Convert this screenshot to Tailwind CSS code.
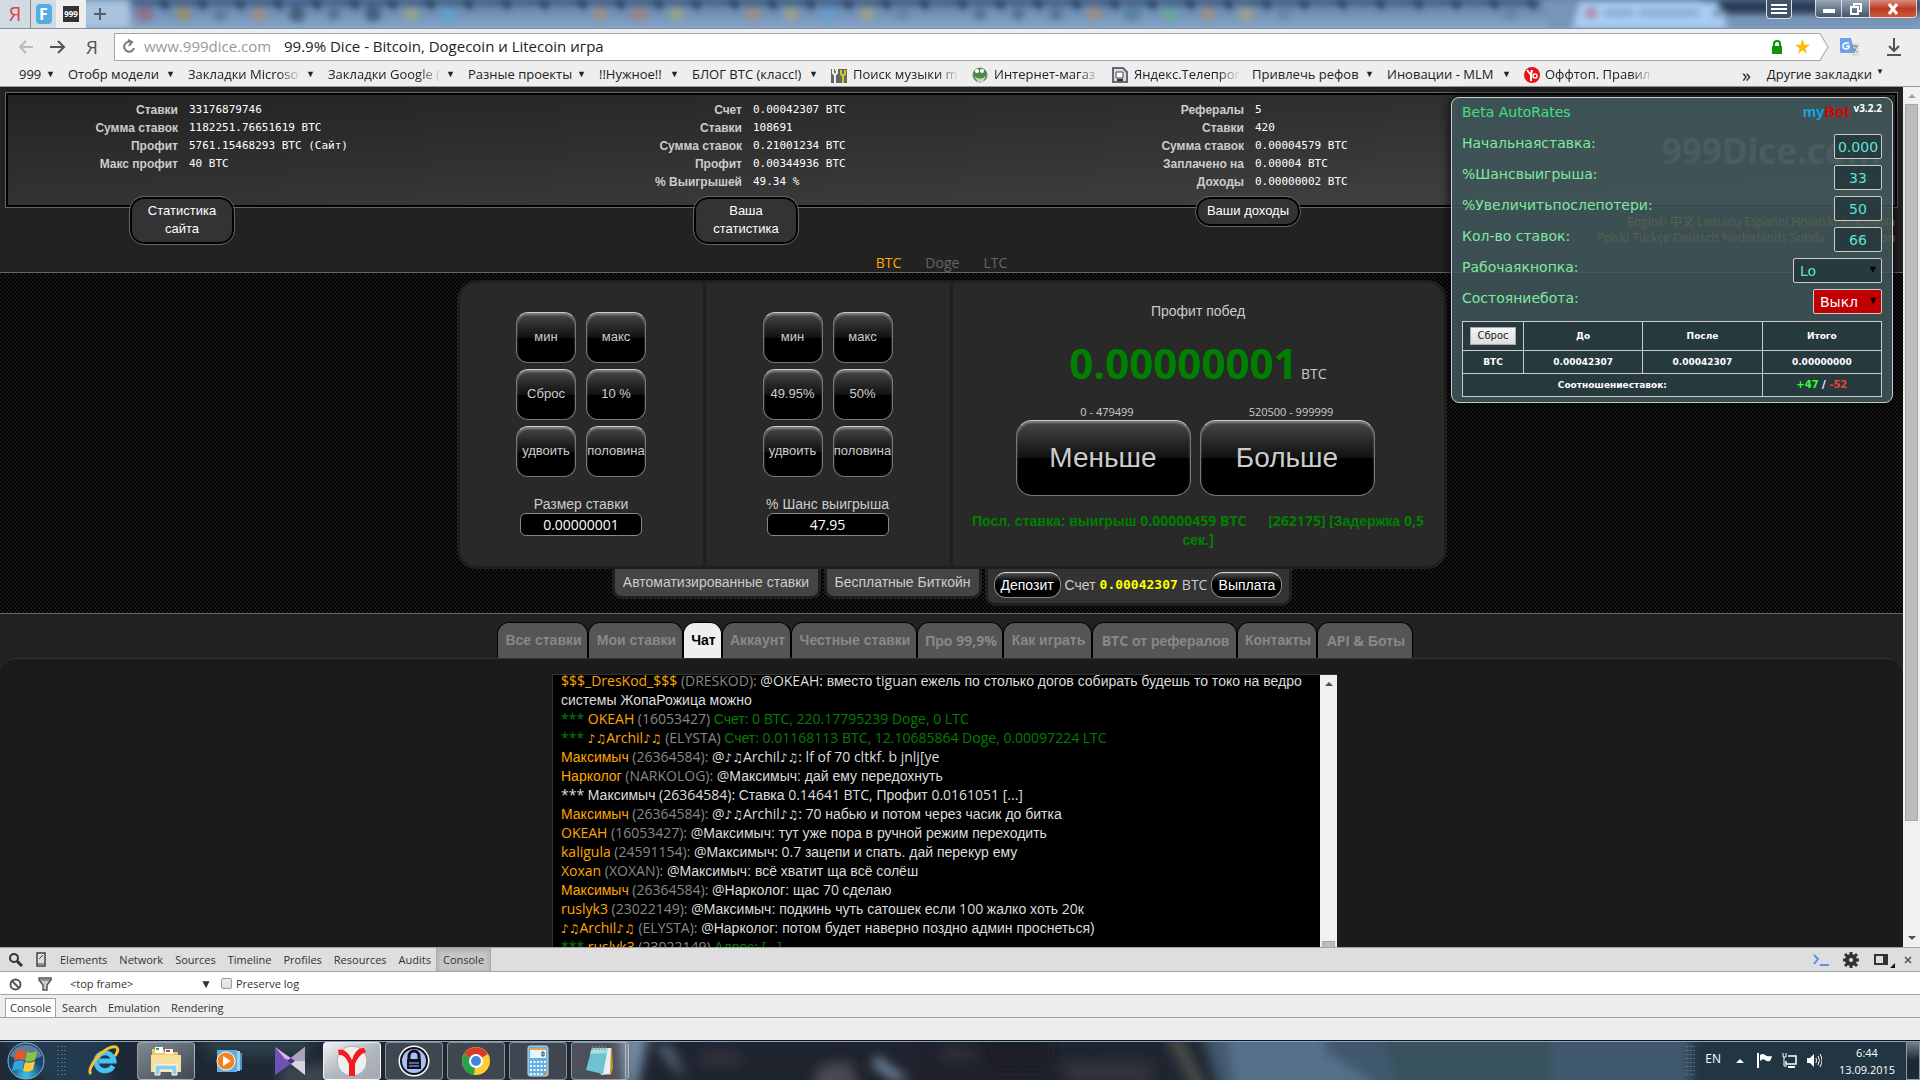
<!DOCTYPE html>
<html lang="ru">
<head>
  <meta charset="UTF-8" />
  <meta name="viewport" content="width=device-width, initial-scale=1.0" />
  <title>99.9% Dice - Bitcoin, Dogecoin и Litecoin игра</title>
  <script src="https://cdn.jsdelivr.net/npm/@tailwindcss/browser@4"></script>
</head>
<body class="h-screen flex flex-col overflow-hidden bg-[#222] font-['Open_Sans','Liberation_Sans',sans-serif] text-sm text-[#ccc]">

  <!-- Browser tab strip -->
  <header class="h-7 shrink-0 relative flex bg-linear-to-b from-[#5f7fa4] to-[#86a5c9] overflow-hidden">
    <svg class="absolute inset-0 w-full h-full blur-[3px]" aria-hidden="true">
      <defs>
        <pattern id="tabs" x="128" width="38" height="28" patternUnits="userSpaceOnUse">
          <path d="M-2 0h40l-7 5H9z" fill="#3b587c" />
          <path d="M28 0h10l4 14z M0 0h4l-4 12z" fill="#213a5a" />
        </pattern>
      </defs>
      <rect x="128" width="1450" height="28" fill="url(#tabs)" />
      <rect width="130" height="28" fill="#a9c3dd" />
      <path d="M1540 0h380v28h-370z" fill="#7795b8" />
      <path d="M1700 0h220v14h-190z" fill="#2c3d55" />
      <path d="M1572 28l8-26h138l10 26z" fill="#a9cdf2" />
      <g stroke-width="16" stroke-linecap="round" opacity=".55">
        <path d="M145 14h0" stroke="#a85468" /><path d="M183 14h0" stroke="#b08a3c" /><path d="M220 15h0" stroke="#4a6585" stroke-width="12" />
        <path d="M259 14h0M600 14h0M753 14h0M1094 14h0M1208 14h0" stroke="#b58a68" /><path d="M297 14h0M373 14h0" stroke="#23364c" />
        <path d="M334 14h0M980 14h0M1018 14h0M1056 14h0" stroke="#3d526c" stroke-width="12" /><path d="M411 14h0M677 14h0M791 14h0M867 14h0M1246 14h0" stroke="#b4ac74" />
        <path d="M448 14h0M829 14h0" stroke="#58a6dc" /><path d="M639 14h0" stroke="#c0766a" /><path d="M1132 14h0" stroke="#417a83" /><path d="M1169 14h0" stroke="#62b38c" />
        <path d="M902 14h0M1284 14h0M1510 14h0" stroke="#5e7694" stroke-width="12" /><path d="M1591 13h0" stroke="#b5526c" stroke-width="12" />
        <path d="M1607 13h24M1642 13h54" stroke="#6c8db5" stroke-width="7" /><path d="M1717 13h0" stroke="#445e80" stroke-width="8" />
      </g>
    </svg>
    <nav class="relative flex w-[172px]">
      <a href="#" class="w-[31px] border-r border-[#888] bg-[#d3dbe2] text-center text-[20px] leading-7 text-[#e0404b]">Я</a>
      <a href="#" class="w-[25px] bg-[#d3dbe2] flex items-center justify-center"><span class="w-4 h-5 rounded-sm bg-[#55ace0] text-white font-bold text-base leading-5 text-center">F</span></a>
      <a href="#" class="w-[30px] bg-[#eee] flex items-center justify-center"><span class="w-4 h-4 bg-[#333] text-white font-bold text-[8px] leading-4 text-center">999</span></a>
      <button class="w-7 flex items-center justify-center" aria-label="Новая вкладка"><svg class="w-3 h-3" viewBox="0 0 12 12"><path d="M6 0v12M0 6h12" stroke="#555f6b" stroke-width="2" /></svg></button>
    </nav>
    <div class="relative ml-auto mr-[3px] flex items-start">
      <button aria-label="Меню" class="w-[26px] h-[19px] mr-[23px] rounded-b border border-t-0 border-white/80 bg-[#41536a] flex items-center justify-center"><svg class="w-4 h-3" viewBox="0 0 16 12"><path d="M0 2h16M0 6h16M0 10h16" stroke="#fff" stroke-width="2" /></svg></button>
      <button aria-label="Свернуть" class="w-[27px] h-[18px] rounded-bl border border-t-0 border-white/70 bg-linear-to-b from-[#9aa8b8] to-[#44566c] flex items-center justify-center"><span class="w-3 h-1 mt-1 bg-white"></span></button>
      <button aria-label="Развернуть" class="w-[27px] h-[18px] border-b border-white/70 bg-linear-to-b from-[#9aa8b8] to-[#44566c] flex items-center justify-center"><svg class="w-3 h-3" viewBox="0 0 12 12" fill="none" stroke="#fff" stroke-width="2"><path d="M4 3V1h7v7H9M1 4h7v7H1z" /></svg></button>
      <button aria-label="Закрыть" class="w-12 h-[18px] rounded-br border border-t-0 border-white/70 bg-linear-to-b from-[#d98a7c] via-[#c03a22] to-[#c75a3c] flex items-center justify-center"><svg class="w-3 h-3" viewBox="0 0 12 12"><path d="M2 1l8 10M10 1L2 11" stroke="#fff" stroke-width="3" /></svg></button>
    </div>
  </header>

  <!-- Address bar -->
  <div class="h-[33px] shrink-0 flex items-center bg-[#eee] border-t border-[#7c93ad] pt-[3px] pl-[18px] pr-3">
    <button aria-label="Назад" class="w-8"><svg class="w-4 h-4" viewBox="0 0 16 16" fill="none" stroke="#bbb" stroke-width="2"><path d="M15 8H2M8 2L2 8l6 6" /></svg></button>
    <button aria-label="Вперед" class="w-8"><svg class="w-4 h-4" viewBox="0 0 16 16" fill="none" stroke="#555" stroke-width="2"><path d="M0 8h13M8 2l6 6-6 6" /></svg></button>
    <a href="#" class="w-8 pl-1 text-[19px] leading-6 text-[#555]">Я</a>
    <div class="flex-1 h-7 relative flex items-center pl-[9px] mr-[7px] text-[15px]">
      <svg class="absolute inset-0 w-full h-full" viewBox="0 0 1710 28" preserveAspectRatio="none"><path d="M.5.5H1701L1709 14L1701 27.500H.5z" fill="#fff" stroke="#a5a5a5" /></svg>
      <svg class="relative w-[13px] h-[15px] mr-2" viewBox="0 0 13 15" fill="none" stroke="#777" stroke-width="2"><path d="M11 9a5 5 0 1 1-3-6M5 1l4 2-3 4" /></svg>
      <span class="relative text-[#999] w-[140px]">www.999dice.com</span>
      <span class="relative text-[#222]">99.9% Dice - Bitcoin, Dogecoin и Litecoin игра</span>
      <svg class="relative w-3 h-[14px] ml-auto" viewBox="0 0 12 14"><path d="M3 6V4a3 3 0 0 1 6 0v2" fill="none" stroke="#0d940d" stroke-width="2" /><path d="M1 6h10v8H1z" fill="#0d940d" /></svg>
      <svg class="relative w-[15px] h-[15px] ml-3 mr-[19px]" viewBox="0 0 16 16"><path d="M8 0l2 6h6l-5 4 2 6-5-4-5 4 2-6-5-4h6z" fill="#fb0" /></svg>
    </div>
    <svg class="w-5 h-5 mr-[26px] ml-1" viewBox="0 0 20 20"><path d="M9 6h10v13H12z" fill="#ddd" /><path d="M0 1h11l4 15H1Q0 16 0 14z" fill="#6fa0ee" /><path d="M9 6H6a3 3 0 1 0 3 3H6" fill="none" stroke="#fff" stroke-width="1.500" /><path d="M11 9h7M15 8v2M17 9q-2 5-4 6M13 11l4 4" fill="none" stroke="#888" /></svg>
    <svg class="w-4 h-5 mr-[6px]" viewBox="0 0 16 20" fill="none" stroke="#555" stroke-width="2"><path d="M8 1v13M3 9l5 5 5-5M1 18h14" /></svg>
  </div>

  <!-- Bookmarks -->
  <nav class="h-[26px] shrink-0 flex items-center bg-[#eee] border-b border-[#999] pt-0.5 pl-[19px] pr-5 text-[13px] text-[#222] whitespace-nowrap [&_i]:not-italic [&_i]:text-[9px] [&_i]:w-[10px] [&_i]:mr-3 [&_a]:flex [&_a]:items-center [&_a]:justify-between [&_span]:overflow-hidden">
    <a href="#" class="w-[49px]"><span>999</span><i>▼</i></a>
    <a href="#" class="w-[120px]"><span>Отобр модели</span><i>▼</i></a>
    <a href="#" class="w-[140px]"><span class="w-[114px] mask-r-from-80%">Закладки Microso</span><i>▼</i></a>
    <a href="#" class="w-[140px]"><span class="w-[114px] mask-r-from-80%">Закладки Google (</span><i>▼</i></a>
    <a href="#" class="w-[131px]"><span>Разные проекты</span><i>▼</i></a>
    <a href="#" class="w-[93px]"><span>!!Нужное!!</span><i>▼</i></a>
    <a href="#" class="w-[139px]"><span>БЛОГ ВТС (класс!)</span><i>▼</i></a>
    <a href="#" class="w-[141px]"><svg class="w-4 h-4 shrink-0 mr-[6px]" viewBox="0 0 16 16"><path d="M0 2h16v14H0z" fill="#666" /><path d="M2 0v6l2 2v8M6 0v6L4 8M5 0v4" stroke="#eee" stroke-width="2" fill="none" /><path d="M10 3v4l2 2v7M14 3v4l-2 2" stroke="#cc2" stroke-width="2" fill="none" /></svg><span class="w-[106px] mr-auto mask-r-from-80%">Поиск музыки m</span></a>
    <a href="#" class="w-[140px]"><svg class="w-4 h-4 shrink-0 mr-[6px]" viewBox="0 0 16 16"><circle cx="8" cy="8" r="7" fill="#498a48" stroke="#777" /><path d="M2 9q6 5 12 0l-3 6H6z" fill="#c9d6be" /><circle cx="5" cy="4" r="2" fill="#fff" /><circle cx="10" cy="4" r="2" fill="#fff" /></svg><span class="w-[106px] mr-auto mask-r-from-80%">Интернет-магаз</span></a>
    <a href="#" class="w-[140px]"><svg class="w-4 h-4 shrink-0 mr-[6px]" viewBox="0 0 16 16"><path d="M1 1h10l4 4v10H1z" fill="#ddd" stroke="#667" stroke-width="2" /><path d="M4 5h7v6H4z" fill="#fff" stroke="#445" /><path d="M5 13h6" stroke="#333" stroke-width="2" /></svg><span class="w-[106px] mr-auto mask-r-from-80%">Яндекс.Телепрог</span></a>
    <a href="#" class="w-[135px]"><span>Привлечь рефов</span><i>▼</i></a>
    <a href="#" class="w-[137px]"><span>Иновации - MLM</span><i>▼</i></a>
    <a href="#" class="w-[140px]"><svg class="w-4 h-4 shrink-0 mr-[5px]" viewBox="0 0 16 16"><circle cx="8" cy="8" r="8" fill="#e11" /><path d="M3 3l4 5v6M8 3L7 8" stroke="#fff" stroke-width="2" fill="none" /><circle cx="11" cy="9" r="2" fill="none" stroke="#fff" stroke-width="1.500" /></svg><span class="w-[108px] mr-auto mask-r-from-80%">Оффтоп. Правил</span></a>
    <span class="ml-auto mr-4 text-lg leading-5">»</span>
    <a href="#" class="mr-4">Другие закладки<b class="text-[8px] ml-1 mb-2">▼</b></a>
  </nav>

  <!-- Page and its scrollbar -->
  <div class="flex-1 min-h-0 flex relative">
    <main class="flex-1 min-w-0 overflow-hidden flex flex-col font-['Liberation_Sans',sans-serif]">
      <section class="shrink-0 h-[186px] relative border-b border-[#666] pt-[5px] px-[5px] bg-[#222]">
        <div class="h-[116px] border border-[#666] p-0.5 bg-black">
          <div class="h-full bg-linear-to-br from-[#232323] to-[#444] pt-[6px] pl-[30px] grid grid-cols-[564fr_502fr_791fr] [&_dl]:grid [&_dl]:grid-cols-[140px_1fr] [&_dl]:gap-x-[11px] [&_dl]:content-start [&_dl]:leading-[18px] [&_dt]:text-right [&_dt]:text-xs [&_dt]:leading-[18px] [&_dt]:font-bold [&_dd]:text-[11px] [&_dd]:leading-[18px] [&_dd]:text-white [&_dd]:font-['DejaVu_Sans_Mono',monospace]">
            <dl>
              <dt>Ставки</dt><dd>33176879746</dd>
              <dt>Сумма ставок</dt><dd>1182251.76651619 BTC</dd>
              <dt>Профит</dt><dd>5761.15468293 BTC (Сайт)</dd>
              <dt>Макс профит</dt><dd>40 BTC</dd>
            </dl>
            <dl>
              <dt>Счет</dt><dd>0.00042307 BTC</dd>
              <dt>Ставки</dt><dd>108691</dd>
              <dt>Сумма ставок</dt><dd>0.21001234 BTC</dd>
              <dt>Профит</dt><dd>0.00344936 BTC</dd>
              <dt>% Выигрышей</dt><dd>49.34 %</dd>
            </dl>
            <dl>
              <dt>Рефералы</dt><dd>5</dd>
              <dt>Ставки</dt><dd>420</dd>
              <dt>Сумма ставок</dt><dd>0.00004579 BTC</dd>
              <dt>Заплачено на</dt><dd>0.00004 BTC</dd>
              <dt>Доходы</dt><dd>0.00000002 BTC</dd>
            </dl>
          </div>
        </div>
        <div class="relative -mt-[11px] h-[56px] pl-8 pr-1 grid grid-cols-[564fr_502fr_791fr] text-[13px] leading-[18px] text-white [&_div]:w-[290px] [&_div]:flex [&_div]:justify-center [&_div]:items-start [&_button]:rounded-[14px] [&_button]:border-2 [&_button]:border-black [&_button]:outline [&_button]:outline-[#666] [&_button]:bg-[#333] [&_button]:w-[104px] [&_button]:pt-[3px] [&_button]:pb-1">
          <div><button>Статистика<br>сайта</button></div>
          <div><button>Ваша<br>статистика</button></div>
          <div><button>Ваши доходы</button></div>
        </div>
        <div class="flex justify-center gap-6 pr-5 text-sm leading-5 text-[#666] font-['Open_Sans',sans-serif]">
          <a href="#" class="text-[orange]">BTC</a><a href="#">Doge</a><a href="#">LTC</a>
        </div>
        <p class="absolute right-[22px] top-[37px] font-['Open_Sans',sans-serif] font-bold text-[35px] leading-[54px] text-[#888]">999Dice.com</p>
        <p class="absolute right-2 top-[127px] text-right text-xs leading-4 text-[#f90] font-['Open_Sans','Noto_Sans_CJK_SC',sans-serif]">English 中文 Lietuvių Español Hrvatski Indonesia<br>Polski Türkçe Deutsch Nederlands Sunda &#xF8E4;&#xF8D7;&#xF8DC; Klingon</p>
      </section>

      <!-- Betting area -->
      <section class="shrink-0 h-[341px] pt-[7px] flex flex-col items-center border-b border-[#666] bg-[repeating-conic-gradient(#000_0_25%,#191919_0_50%)] bg-[length:4px_4px]">
        <div class="w-[990px] h-[289px] rounded-[20px] border-3 border-[#1f1f1f] bg-[#292929] grid grid-cols-[246px_247px_1fr] [&_button]:text-[#ccc] [&_button]:border [&_button]:border-[#777] [&_button]:border-t-[#ccc] [&_button]:bg-linear-to-b [&_button]:from-[#4a4a4a] [&_button]:via-[#111] [&_button]:via-50% [&_button]:to-black [&_button]:to-50% [&_button]:shadow-[inset_0_2px_2px_#999a]">
          <div class="border-r-3 border-[#1f1f1f] flex flex-col items-center pt-[29px]">
            <div class="grid grid-cols-[60px_60px] auto-rows-[51px] gap-x-[10px] gap-y-[6px] text-[13px] [&_button]:rounded-xl [&_button]:whitespace-nowrap">
              <button>мин</button><button>макс</button>
              <button>Сброс</button><button>10 %</button>
              <button>удвоить</button><button>половина</button>
            </div>
            <label for="bet" class="mt-[18px] leading-[18px]">Размер ставки</label>
            <input id="bet" value="0.00000001" class="w-[122px] h-[23px] rounded-md border border-[#888] bg-black text-white text-center font-['Open_Sans',sans-serif]">
          </div>
          <div class="border-r-3 border-[#1f1f1f] flex flex-col items-center pt-[29px]">
            <div class="grid grid-cols-[60px_60px] auto-rows-[51px] gap-x-[10px] gap-y-[6px] text-[13px] [&_button]:rounded-xl [&_button]:whitespace-nowrap">
              <button>мин</button><button>макс</button>
              <button>49.95%</button><button>50%</button>
              <button>удвоить</button><button>половина</button>
            </div>
            <label for="chance" class="mt-[18px] leading-[18px]">% Шанс выигрыша</label>
            <input id="chance" value="47.95" class="w-[122px] h-[23px] rounded-md border border-[#888] bg-black text-white text-center font-['Open_Sans',sans-serif]">
          </div>
          <div class="flex flex-col items-center pt-[18px]">
            <p class="leading-5">Профит побед</p>
            <p class="mt-3 h-[60px] leading-[60px] font-['Open_Sans',sans-serif]"><b class="text-[42px] text-[green]">0.00000001</b> BTC</p>
            <div class="grid grid-cols-[175px_175px] gap-x-[9px] mt-[11px] pr-[6px] text-center">
              <span class="pl-2 text-[11px] leading-4 font-['Open_Sans',sans-serif]">0 - 479499</span>
              <span class="pl-2 text-[11px] leading-4 font-['Open_Sans',sans-serif]">520500 - 999999</span>
              <button class="h-[76px] rounded-2xl text-[28px]">Меньше</button>
              <button class="h-[76px] rounded-2xl text-[28px]">Больше</button>
            </div>
            <p class="mt-[15px] px-3 text-center font-bold leading-[19px] text-[green] whitespace-pre-wrap [&>span]:font-['Open_Sans',sans-serif]">Посл. ставка: выигрыш <span>0.00000459 BTC      [262175] [</span>Задержка <span>0,5</span> сек.]</p>
          </div>
        </div>
        <div class="flex items-start gap-[3px] [&>*]:border-3 [&>*]:border-t-0 [&>*]:border-[#1f1f1f] [&>*]:rounded-b-[10px] whitespace-nowrap">
          <button class="h-[30px] w-[209px] pb-0.5 bg-[#444] text-[#ccc]">Автоматизированные ставки</button>
          <button class="h-[30px] w-[158px] pb-0.5 bg-[#444] text-[#ccc]">Бесплатные Биткойн</button>
          <div class="h-[37px] w-[307px] pb-0.5 bg-[#333] flex items-center justify-center gap-1 [&_button]:h-[26px] [&_button]:rounded-xl [&_button]:border [&_button]:border-[#888] [&_button]:border-t-[#ddd] [&_button]:bg-linear-to-b [&_button]:from-[#555] [&_button]:to-black [&_button]:to-50% [&_button]:text-white">
            <button class="w-[67px]">Депозит</button>
            <span>Счет</span><b class="font-['DejaVu_Sans_Mono',monospace] text-[13px] text-[#ff0]">0.00042307</b><span class="font-['Open_Sans',sans-serif]">BTC</span>
            <button class="w-[71px]">Выплата</button>
          </div>
        </div>
      </section>

      <!-- Tabs -->
      <nav class="shrink-0 h-[44px] pt-[8px] pl-[7px] flex justify-center bg-[#222] text-sm font-bold text-[#888] whitespace-nowrap [&_span]:font-['Open_Sans',sans-serif] [&_a]:h-[36px] [&_a]:leading-[35px] [&_a]:pl-0.5 [&_a]:text-center [&_a]:border [&_a]:border-b-0 [&_a]:border-black [&_a]:rounded-t-xl">
        <a href="#" class="w-[91px] bg-[#555]">Все ставки</a>
        <a href="#" class="w-[95px] bg-[#555]">Мои ставки</a>
        <a href="#" class="w-[39px] bg-[#eee] text-black">Чат</a>
        <a href="#" class="w-[69px] bg-[#555]">Аккаунт</a>
        <a href="#" class="w-[126px] bg-[#555]">Честные ставки</a>
        <a href="#" class="w-[86px] bg-[#555]">Про <span>99,9%</span></a>
        <a href="#" class="w-[89px] bg-[#555]">Как играть</a>
        <a href="#" class="w-[145px] bg-[#555]"><span>BTC</span> от рефералов</a>
        <a href="#" class="w-[80px] bg-[#555]">Контакты</a>
        <a href="#" class="w-[96px] bg-[#555]"><span>API &amp;</span> Боты</a>
      </nav>

      <!-- Chat: Cyrillic runs use the sans face, everything else Open Sans -->
      <section class="flex-1 min-h-0 flex justify-center items-stretch pt-[15px] pr-[14px] border-t border-[#333] rounded-t-[16px] bg-[#1b1b1b]">
        <div class="w-[785px] flex overflow-hidden border border-b-0 border-r-0 border-[#333] bg-black">
          <div class="flex-1 pl-2 -mt-1 text-sm leading-[19px] text-[#ddd] font-['Open_Sans','DejaVu_Sans',sans-serif] [&_p]:h-[19px] [&_p]:whitespace-nowrap [&_b]:font-normal [&_b]:text-[orange] [&_i]:not-italic [&_i]:text-[#888] [&_em]:not-italic [&_em]:text-[green] [&_span]:font-['Liberation_Sans',sans-serif] [&_u]:no-underline [&_u]:text-xs">
            <p><b>$$$_DresKod_$$$</b> <i>(DRESKOD):</i> @OKEAH: <span>вместо</span> tiguan <span>ежель по столько догов собирать будешь то токо на ведро</span></p>
            <p><span>системы ЖопаРожица можно</span></p>
            <p><em>***</em> <b>OKEAH</b> <i>(16053427)</i> <em><span>Счет</span>: 0 BTC, 220.17795239 Doge, 0 LTC</em></p>
            <p><em>***</em> <b><u>♪♫</u>Archil<u>♪♫</u></b> <i>(ELYSTA)</i> <em><span>Счет</span>: 0.01168113 BTC, 12.10685864 Doge, 0.00097224 LTC</em></p>
            <p><b><span>Максимыч</span></b> <i>(26364584):</i> @<u>♪♫</u>Archil<u>♪♫</u>: lf of 70 cltkf. b jnlj[ye</p>
            <p><b><span>Нарколог</span></b> <i>(NARKOLOG):</i> @<span>Максимыч: дай ему передохнуть</span></p>
            <p>*** <span>Максимыч</span> (26364584): <span>Ставка</span> 0.14641 BTC, <span>Профит</span> 0.0161051 [...]</p>
            <p><b><span>Максимыч</span></b> <i>(26364584):</i> @<u>♪♫</u>Archil<u>♪♫</u>: 70 <span>набью и потом через часик до битка</span></p>
            <p><b>OKEAH</b> <i>(16053427):</i> @<span>Максимыч: тут уже пора в ручной режим переходить</span></p>
            <p><b>kaligula</b> <i>(24591154):</i> @<span>Максимыч</span>: 0.7 <span>зацепи и спать. дай перекур ему</span></p>
            <p><b>Xoxan</b> <i>(XOXAN):</i> @<span>Максимыч: всё хватит ща всё солёш</span></p>
            <p><b><span>Максимыч</span></b> <i>(26364584):</i> @<span>Нарколог: щас</span> 70 <span>сделаю</span></p>
            <p><b>ruslyk3</b> <i>(23022149):</i> @<span>Максимыч: подкинь чуть сатошек если</span> 100 <span>жалко хоть</span> 20<span>к</span></p>
            <p><b><u>♪♫</u>Archil<u>♪♫</u></b> <i>(ELYSTA):</i> @<span>Нарколог: потом будет наверно поздно админ проснеться)</span></p>
            <p><em>***</em> <b>ruslyk3</b> <i>(23022149)</i> <em><span>Адрес</span>: [...]</em></p>
          </div>
          <div class="w-[17px] bg-[#f1f1f1] flex flex-col items-center justify-between pt-[7px]">
            <svg class="w-2 h-1" viewBox="0 0 8 4"><path d="M0 4l4-4 4 4z" fill="#505050" /></svg>
            <div class="w-[13px] h-[6px] border border-b-0 border-[#a8a8a8] bg-[#bcbcbc]"></div>
          </div>
        </div>
      </section>
    </main>
    <div class="w-[17px] bg-[#f1f1f1] flex flex-col items-center py-[7px]">
      <svg class="w-2 h-1" viewBox="0 0 8 4"><path d="M0 4l4-4 4 4z" fill="#a3a3a3" /></svg>
      <div class="w-[13px] h-[717px] mt-[6px] border border-[#a8a8a8] bg-[#bcbcbc]"></div>
      <svg class="w-2 h-1 mt-auto" viewBox="0 0 8 4"><path d="M0 0l4 4 4-4z" fill="#505050" /></svg>
    </div>

    <!-- Bot panel floating over the page -->
    <aside class="absolute right-[27px] top-[10px] w-[442px] h-[306px] rounded-lg border border-[#ccc] bg-[#40565a]/88 shadow-[0_0_12px_#000] px-[10px] font-['DejaVu_Sans',sans-serif] text-sm text-[#7fe8a0]">
      <div class="h-[36px] pt-1 flex justify-between">
        <h2 class="leading-5 text-[#3fe07f]">Beta AutoRates</h2>
        <p class="flex gap-1 font-bold"><span class="font-['Liberation_Sans',sans-serif] text-[15px] leading-5 text-[#e00000]"><span class="text-[#12a5e8]">my</span>Bot</span><span class="font-['Open_Sans',sans-serif] text-[10px] leading-3 text-white">v3.2.2</span></p>
      </div>
      <form class="[&_div]:flex [&_div]:h-[31px] [&_div]:justify-between [&_label]:leading-[18px] [&_input]:w-12 [&_input]:h-[25px] [&_input]:rounded-xs [&_input]:border [&_input]:border-[#ccc] [&_input]:bg-[#22353a]/80 [&_input]:text-center [&_input]:text-[#5fe0d8] [&_select]:h-[25px] [&_select]:rounded-xs [&_select]:border [&_select]:border-[#ccc] [&_select]:appearance-none [&_select]:pl-[6px] [&_span]:relative [&_i]:absolute [&_i]:right-[6px] [&_i]:top-[6px] [&_i]:text-[8px] [&_i]:leading-3 [&_i]:text-black [&_i]:not-italic">
        <div><label for="start">Начальнаяставка:</label><input id="start" value="0.000"></div>
        <div><label for="win">%Шансвыигрыша:</label><input id="win" value="33"></div>
        <div><label for="inc">%Увеличитьпослепотери:</label><input id="inc" value="50"></div>
        <div><label for="count">Кол-во ставок:</label><input id="count" value="66"></div>
        <div><label for="side">Рабочаякнопка:</label><span><select id="side" class="w-[89px] bg-[#22353a]/80 text-[#5fe0d8]"><option>Lo</option><option>Hi</option></select><i>▼</i></span></div>
        <div><label for="state">Состояниебота:</label><span><select id="state" class="w-[69px] bg-[#c00000] text-white"><option>Выкл</option><option>Вкл</option></select><i>▼</i></span></div>
      </form>
      <table class="w-full mt-px table-fixed border-collapse bg-[#1f3236]/70 text-[9px] font-bold text-white text-center [&_td]:border [&_td]:border-[#ccc] [&_th]:border [&_th]:border-[#ccc]">
        <tr class="h-[29px]"><th class="w-[61px]"><button class="w-[46px] h-[18px] border border-[#aaa] bg-linear-to-b from-[#f6f6f6] to-[#ddd] text-[10px] font-normal text-[#222]">Сброс</button></th><th>До</th><th>После</th><th>Итого</th></tr>
        <tr class="h-[23px]"><td>BTC</td><td>0.00042307</td><td>0.00042307</td><td>0.00000000</td></tr>
        <tr class="h-[23px]"><td colspan="3">Соотношениеставок:</td><td class="text-[10px]"><span class="text-[#3f3]">+47</span> / <span class="text-[#f04040]">-52</span></td></tr>
      </table>
    </aside>
  </div>

  <!-- Developer tools -->
  <section class="shrink-0 h-[93px] bg-[#eee] text-[#333] text-[11px]">
    <div class="h-[25px] border-y border-[#a3a3a3] bg-[#dedede] flex items-center pl-[9px] pr-2 [&>a]:mr-3">
      <svg class="w-[14px] h-[14px] mr-[13px]" viewBox="0 0 14 14" fill="none" stroke="#333"><circle cx="5" cy="5" r="4" stroke-width="2" /><path d="M8 8l5 5" stroke-width="3" /></svg>
      <svg class="w-[10px] h-[15px] mr-[14px]" viewBox="0 0 10 15" fill="none" stroke="#444"><path d="M1 1h8v13H1z" stroke-width="1.500" /><path d="M1 12h8" /><path d="M3 7l4-4" /></svg>
      <a href="#">Elements</a><a href="#">Network</a><a href="#">Sources</a><a href="#">Timeline</a><a href="#">Profiles</a><a href="#">Resources</a><a href="#">Audits</a>
      <a href="#" class="-ml-[7px] h-full leading-[23px] px-[6px] border-x border-[#aaa] bg-[#c8c8c8] shadow-[inset_0_2px_6px_#8888]">Console</a>
      <svg class="w-4 h-3 ml-auto mr-[14px]" viewBox="0 0 16 12" fill="none" stroke="#5b8fee" stroke-width="2"><path d="M1 1l4 4-4 5M7 11h9" /></svg>
      <svg class="w-4 h-4 mr-[15px]" viewBox="0 0 16 16" fill="none" stroke="#333"><path d="M8 0v16M0 8h16M2 2l12 12M14 2L2 14" stroke-width="3" /><circle cx="8" cy="8" r="4" stroke-width="4" /><circle cx="8" cy="8" r="2" fill="#dedede" stroke="none" /></svg>
      <svg class="w-[22px] h-4 mr-2" viewBox="0 0 22 16"><path d="M1 3h12v9H1z" fill="none" stroke="#333" stroke-width="2" /><path d="M9 3h4v9H9z" fill="#333" /><path d="M21 11v5h-5z" fill="#111" /></svg>
      <svg class="w-2 h-2" viewBox="0 0 8 8"><path d="M1 1l6 6M7 1L1 7" stroke="#555" stroke-width="1.500" /></svg>
    </div>
    <div class="h-[23px] border-b border-[#a3a3a3] bg-white flex items-center pt-0.5 pl-[9px]">
      <svg class="w-[13px] h-[13px] mr-4" viewBox="0 0 13 13" fill="none" stroke="#555" stroke-width="2"><circle cx="6.500" cy="6.500" r="5" /><path d="M3 3l7 7" /></svg>
      <svg class="w-[14px] h-[14px] mr-[18px]" viewBox="0 0 14 14"><path d="M1 1h12v2L9 8v5H5V8L1 3z" fill="#ccc" stroke="#555" stroke-width="1.500" /><path d="M1 3h12" stroke="#555" /></svg>
      <button class="w-[142px] flex justify-between items-center">&lt;top frame&gt;<span class="text-[12px] leading-4">▼</span></button>
      <label class="flex items-center ml-[9px]"><input type="checkbox" class="appearance-none w-[11px] h-[11px] mr-1 rounded-xs border border-[#999] bg-linear-to-b from-[#eee] to-[#ddd]">Preserve log</label>
    </div>
    <div class="h-[23px] pt-[3px] border-b border-[#a3a3a3] flex pl-[5px] leading-[17px]">
      <a href="#" class="px-1 border border-b-0 border-[#a3a3a3] bg-white mr-[6px]">Console</a><a href="#" class="pt-px mr-[11px]">Search</a><a href="#" class="pt-px mr-[11px]">Emulation</a><a href="#" class="pt-px">Rendering</a>
    </div>
  </section>

  <!-- Windows taskbar -->
  <footer class="shrink-0 h-10 relative border-t border-[#0d1824] bg-linear-to-r from-[#1d2a38] via-[#1f222c] via-50% to-[#22333f] flex items-center overflow-hidden">
    <svg class="absolute inset-0 w-full h-full" viewBox="0 0 1920 39" preserveAspectRatio="none" aria-hidden="true">
      <defs><filter id="soft"><feGaussianBlur stdDeviation="6" /></filter></defs>
      <g filter="url(#soft)">
        <path d="M1200 -10h510v60h-490z" fill="#40586d" /><path d="M1380 -10h170v60h-150z" fill="#37525c" /><path d="M1225 -10h100v20l60 40h-150z" fill="#566f8a" />
        <path d="M1690 -10h240v60h-240z" fill="#213543" /><path d="M620 -10h30l-14 60h-10z" fill="#7288a2" /><path d="M875 14l34 26h-14l-22-16z" fill="#8098b0" />
        <path d="M655 5l20 24 10 5-15-30z" fill="#56667a" /><path d="M1165 -5h16l30 60h-14z" fill="#4a4d48" /><path d="M820 24l30-4 10 30h-50z" fill="#4a4850" />
        <path d="M700 10h40v14h-40zM940 8h36v10h-36zM1060 20h90v24h-80z" fill="#30323b" /><path d="M980 0h70v30h-60z" fill="#1a1c25" />
        <path d="M0 -5h110v60H60z" fill="#243a50" /><path d="M200 -5h110v20H210z" fill="#2f414a" /><path d="M280 24h50v20h-50z" fill="#3a4850" />
      </g>
      <path d="M0 .5h1920" stroke="#8ea4bb" />
    </svg>
    <div class="relative flex items-center h-full pl-[6px] [&_button]:h-[38px] [&_button]:w-[58px] [&_button]:mr-1 [&_button]:flex [&_button]:items-center [&_button]:justify-center [&_button]:rounded-sm [&_button>svg]:w-8 [&_button>svg]:h-8">
      <svg class="w-10 h-10 mr-[11px]" viewBox="0 0 40 40"><defs><radialGradient id="orb" cy=".9"><stop offset="0" stop-color="#3cc5f0" /><stop offset="1" stop-color="#17456f" /></radialGradient></defs><circle cx="20" cy="20" r="18" fill="url(#orb)" stroke="#8fb5cf" /><path d="M4 15a17 17 0 0 1 32 0q-16 8-32 0z" fill="#fff" opacity=".3" /><path d="M10 11q5-3 10-1l-2 9q-5-2-10 1z" fill="#e8562a" /><path d="M21 11q5 2 10-1l-2 9q-5 3-10 1z" fill="#8bc53f" /><path d="M8 21q5-3 10-1l-2 9q-5-2-10 1z" fill="#35a5e0" /><path d="M19 21q5 2 10-1l-2 9q-5 3-10 1z" fill="#fc3" /></svg>
      <svg class="w-[9px] h-8 mr-[9px]" viewBox="0 0 9 32"><path d="M1 1v31M5 1v31M8 1v31" stroke="#8a97a5" stroke-width="1" stroke-dasharray="1 3" /></svg>
      <button aria-label="Internet Explorer"><svg viewBox="0 0 32 32" fill="none"><path d="M25 21a9 9 0 1 1 1-5H11" stroke="#4bc0f5" stroke-width="5" /><path d="M3 29C-3 24 17-1 28 2q4 2-1 9" stroke="#f5c12e" stroke-width="3" /></svg></button>
      <button aria-label="Проводник" class="border border-white/40 bg-linear-to-br from-white/45 to-white/15"><svg viewBox="0 0 32 32"><path d="M2 4h11l2 3h13v20H2z" fill="#e9c868" /><path d="M5 2h8v6H5z" fill="#fff" /><path d="M6 3h3v2H6z" fill="#3a3" /><path d="M15 4h8v5h-8z" fill="#fff" /><path d="M16 5h4v2h-4z" fill="#d33" /><path d="M1 10h30v17H1z" fill="#f7e19a" /><path d="M5 30V20h22v10h-5v-5H10v5z" fill="#89cdea" stroke="#fff" /></svg></button>
      <button aria-label="Проигрыватель"><svg viewBox="0 0 32 32"><path d="M5 5h20v22H5z" fill="#63aee0" /><path d="M25 6h3v20h-3z" fill="#9dd0ee" /><path d="M28 8h2v17h-2z" fill="#5293c4" /><circle cx="14" cy="16" r="9" fill="#f58220" stroke="#fff" /><path d="M11 11v10l8-5z" fill="#fff" /></svg></button>
      <button aria-label="Плеер"><svg viewBox="0 0 32 32"><path d="M1 2l20 14L1 30z" fill="#7050b0" /><path d="M1 2l20 14-10-2z" fill="#c9b8ea" /><path d="M31 2v28L13 16z" fill="#d9d4e2" /><path d="M31 2v14L13 16z" fill="#a9a2b8" /><path d="M13 16l4-3 4 3-4 3z" fill="#4a2c88" /></svg></button>
      <button aria-label="Яндекс" class="border border-white/80 bg-linear-to-br from-white/95 via-[#b5bac0] to-white/60"><svg viewBox="0 0 32 32"><circle cx="16" cy="16" r="15" fill="#eee" stroke="#aaa" /><path d="M2 5q8-3 14 10Q20 2 28 3l2 4q-7 2-11 12v12h-6V19Q9 9 3 10z" fill="#f31c1c" /></svg></button>
      <button aria-label="KeePass" class="border border-white/40 bg-white/15"><svg viewBox="0 0 32 32"><circle cx="16" cy="16" r="14" fill="#a9c0f0" stroke="#fff" stroke-width="3" /><circle cx="16" cy="16" r="13" fill="none" stroke="#112" stroke-width="2" /><path d="M11 15v-4a5 5 0 0 1 10 0v4" fill="none" stroke="#112" stroke-width="3" /><path d="M9 14h14v10H9z" fill="#112" /><path d="M11 18h10M11 21h10" stroke="#a9c0f0" /></svg></button>
      <button aria-label="Chrome" class="border border-white/40 bg-white/15"><svg viewBox="0 0 32 32"><circle cx="16" cy="16" r="14" fill="#fc3" /><path d="M16 16L4 9a14 14 0 0 1 24 0z" fill="#db3b2c" /><path d="M16 16L4 9a14 14 0 0 0 10 21z" fill="#2ca04c" /><circle cx="16" cy="16" r="7" fill="#fff" /><circle cx="16" cy="16" r="5" fill="#4285e0" /></svg></button>
      <button aria-label="Калькулятор" class="border border-white/40 bg-white/15"><svg viewBox="0 0 32 32"><rect x="6" y="1" width="20" height="30" rx="2" fill="#65aee0" stroke="#bde" /><path d="M8 4h16v9H8z" fill="#e6f5fb" /><path d="M8 3h16v2H8z" fill="#f5a040" /><path d="M20 7h2v4h-2z" fill="none" stroke="#345" /><path d="M8 17h16M8 21h16M8 25h16M8 29h16" stroke="#eff" stroke-width="2" stroke-dasharray="2 1.500" /><path d="M22 26h2v4h-2z" fill="#f58220" /></svg></button>
      <button aria-label="Блокнот" class="border border-white/40 border-r-4 border-double bg-white/20"><svg viewBox="0 0 32 32"><path d="M12 3h17l1 20-2 7-6-1z" fill="#c58f2a" /><path d="M11 3h17l-1 26-9 1z" fill="#e8f1f0" /><path d="M9 3h16l-5 26L3 25z" fill="#6fc3cf" /><path d="M9 3h16l-1 5-17 1z" fill="#a7dfe5" /><path d="M10 1v4M13 1v4M16 1v4M19 1v4M22 1v4" stroke="#889" /></svg></button>
    </div>
    <div class="relative ml-auto flex items-center h-full text-white text-xs">
      <svg class="w-[9px] h-8 mr-[10px]" viewBox="0 0 9 32"><path d="M1 1v31M5 1v31M8 1v31" stroke="#8a97a5" stroke-width="1" stroke-dasharray="1 3" /></svg>
      <span class="mb-1 mr-[15px]">EN</span>
      <svg class="w-2 h-1 mr-[13px]" viewBox="0 0 8 4"><path d="M0 4l4-4 4 4z" fill="#fff" /></svg>
      <svg class="w-[15px] h-[15px] mr-[10px]" viewBox="0 0 15 15"><path d="M1 0v15" stroke="#fff" stroke-width="2" /><path d="M3 2q3-2 5 0t7 1q-1 4-2 5-3 1-5-1T3 8z" fill="#fff" /></svg>
      <svg class="w-[15px] h-[15px] mr-[10px]" viewBox="0 0 15 15" fill="none" stroke="#fff"><path d="M6 3h8v8H4V8" stroke-width="1.500" /><path d="M1 0v4h3V0M2 4v9h3" /><path d="M6 14h7" stroke-width="2" /></svg>
      <svg class="w-[15px] h-[15px] mr-[15px]" viewBox="0 0 15 15"><path d="M0 5h3l4-4v13l-4-4H0z" fill="#fff" /><path d="M9 5q1 2 0 5M11 3q3 4 0 9M13 1q4 6 0 13" fill="none" stroke="#fff" /></svg>
      <p class="w-[60px] mr-[9px] text-center text-[11px] leading-[17px] whitespace-nowrap">6:44<br>13.09.2015</p>
      <div class="w-[14px] h-full border border-[#8a9aa8] bg-linear-to-b from-[#75838f] to-[#1c2a35] to-50%"></div>
    </div>
  </footer>
</body>
</html>
